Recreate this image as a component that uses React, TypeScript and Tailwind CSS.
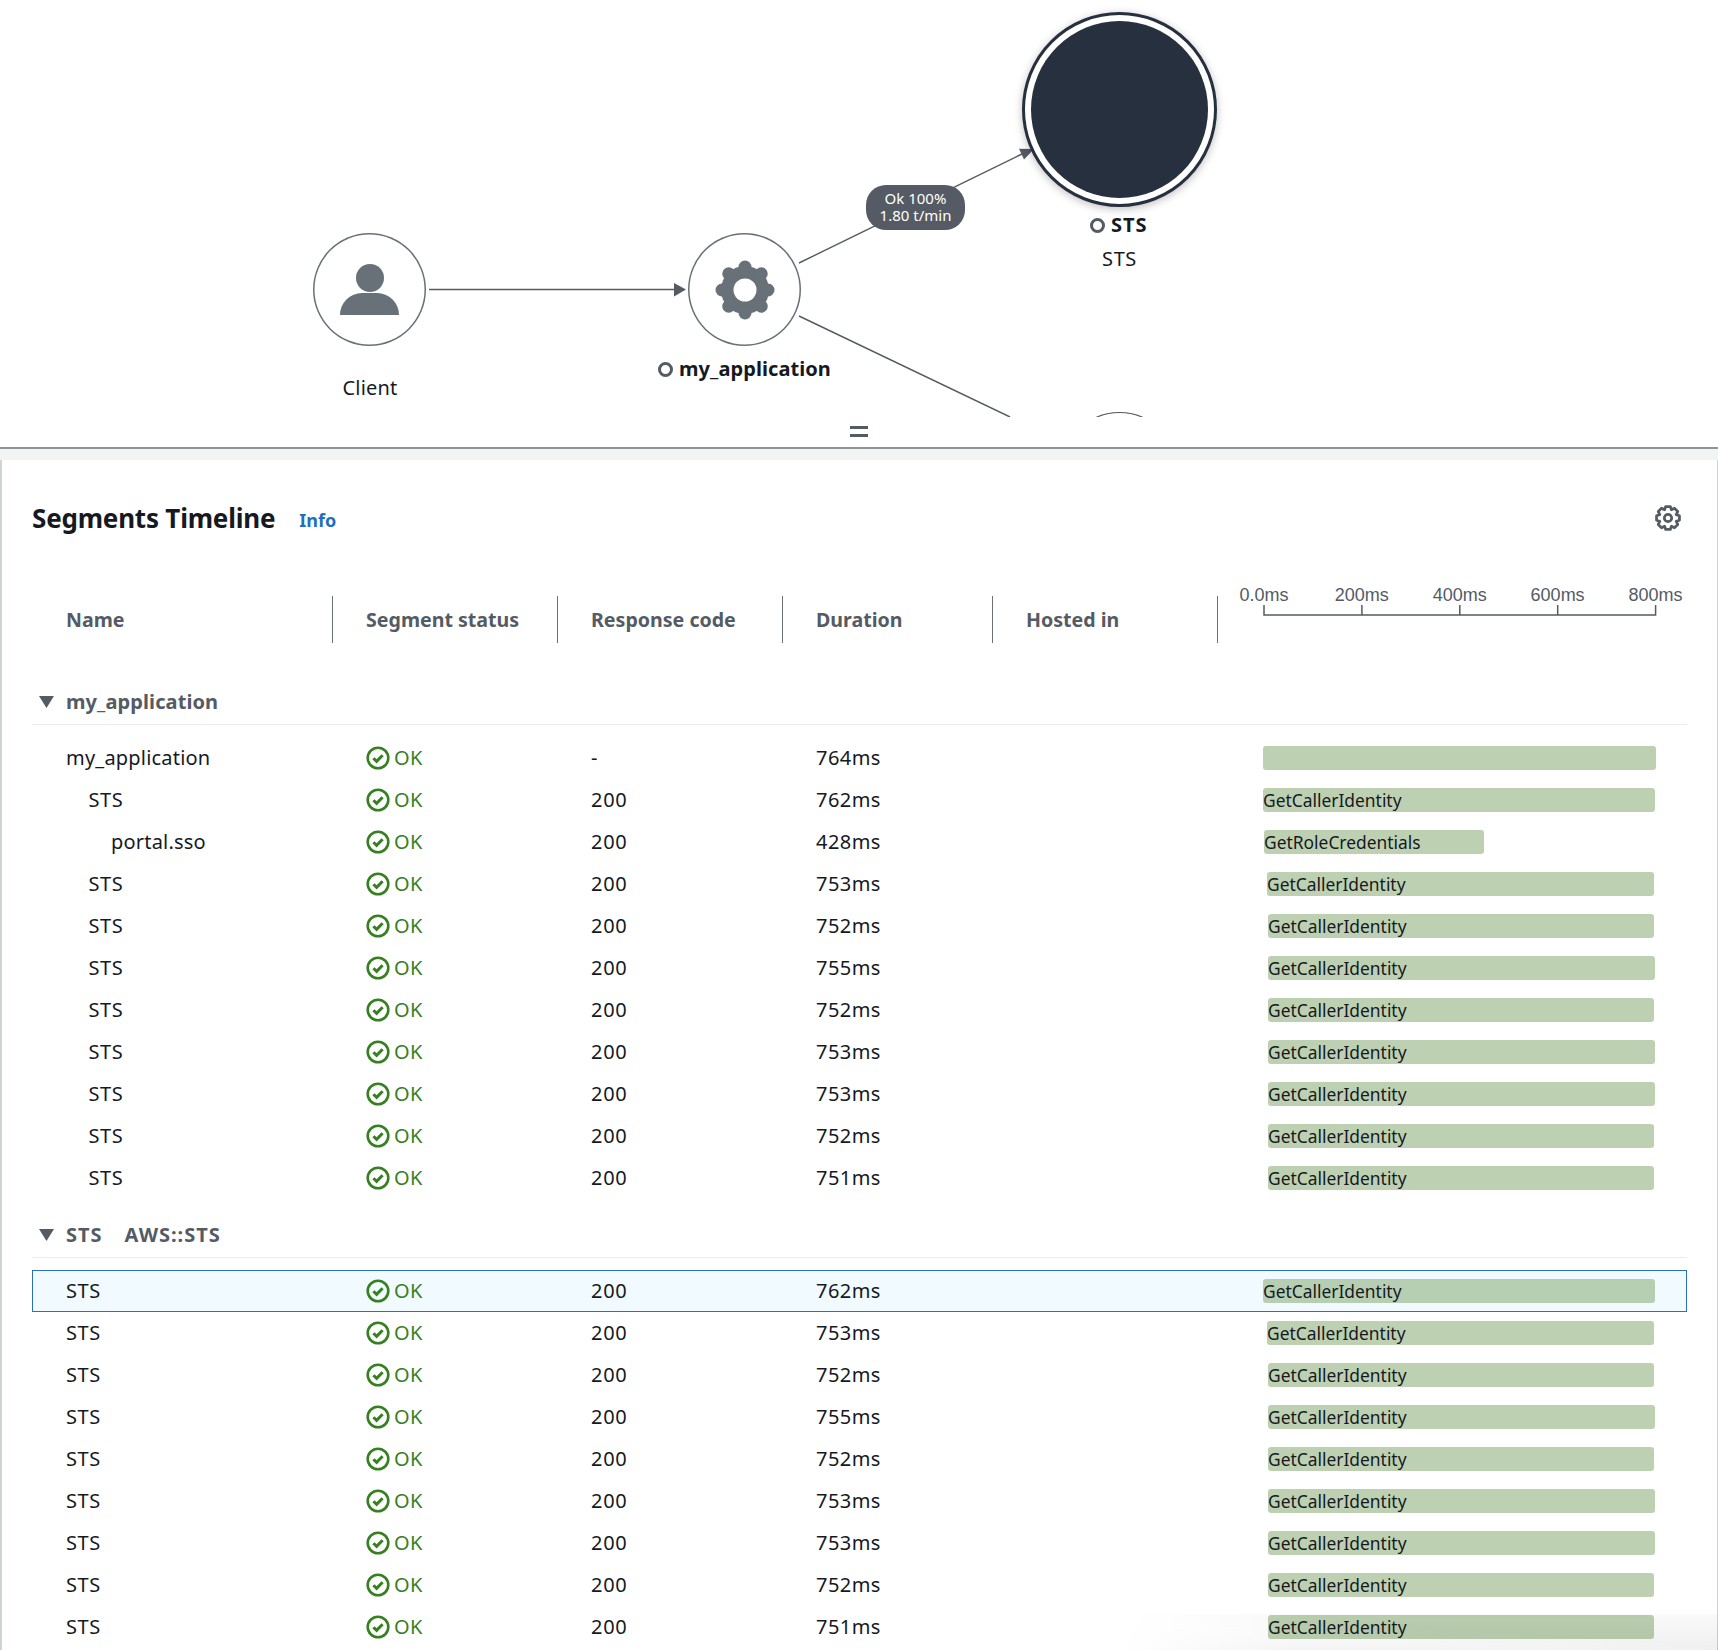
type Row = { name: string; indent: number; code: string; duration: string; op: string; left: number; right: number };

const firstRows: Row[] = [
  { name: 'my_application', indent: 0, code: '-', duration: '764ms', op: '', left: 1263, right: 1656 },
  { name: 'STS', indent: 1, code: '200', duration: '762ms', op: 'GetCallerIdentity', left: 1263, right: 1655 },
  { name: 'portal.sso', indent: 2, code: '200', duration: '428ms', op: 'GetRoleCredentials', left: 1264, right: 1484 },
  { name: 'STS', indent: 1, code: '200', duration: '753ms', op: 'GetCallerIdentity', left: 1267, right: 1654 },
  { name: 'STS', indent: 1, code: '200', duration: '752ms', op: 'GetCallerIdentity', left: 1268, right: 1654 },
  { name: 'STS', indent: 1, code: '200', duration: '755ms', op: 'GetCallerIdentity', left: 1268, right: 1655 },
  { name: 'STS', indent: 1, code: '200', duration: '752ms', op: 'GetCallerIdentity', left: 1268, right: 1654 },
  { name: 'STS', indent: 1, code: '200', duration: '753ms', op: 'GetCallerIdentity', left: 1268, right: 1655 },
  { name: 'STS', indent: 1, code: '200', duration: '753ms', op: 'GetCallerIdentity', left: 1268, right: 1655 },
  { name: 'STS', indent: 1, code: '200', duration: '752ms', op: 'GetCallerIdentity', left: 1268, right: 1654 },
  { name: 'STS', indent: 1, code: '200', duration: '751ms', op: 'GetCallerIdentity', left: 1268, right: 1654 },
];

const stsRows: Row[] = [
  { name: 'STS', indent: 0, code: '200', duration: '762ms', op: 'GetCallerIdentity', left: 1263, right: 1655 },
  { name: 'STS', indent: 0, code: '200', duration: '753ms', op: 'GetCallerIdentity', left: 1267, right: 1654 },
  { name: 'STS', indent: 0, code: '200', duration: '752ms', op: 'GetCallerIdentity', left: 1268, right: 1654 },
  { name: 'STS', indent: 0, code: '200', duration: '755ms', op: 'GetCallerIdentity', left: 1268, right: 1655 },
  { name: 'STS', indent: 0, code: '200', duration: '752ms', op: 'GetCallerIdentity', left: 1268, right: 1654 },
  { name: 'STS', indent: 0, code: '200', duration: '753ms', op: 'GetCallerIdentity', left: 1268, right: 1655 },
  { name: 'STS', indent: 0, code: '200', duration: '753ms', op: 'GetCallerIdentity', left: 1268, right: 1655 },
  { name: 'STS', indent: 0, code: '200', duration: '752ms', op: 'GetCallerIdentity', left: 1268, right: 1654 },
  { name: 'STS', indent: 0, code: '200', duration: '751ms', op: 'GetCallerIdentity', left: 1268, right: 1654 },
];

// outline of the small settings cog, 8 teeth
function cogOutline() {
  const pts: string[] = [];
  for (let i = 0; i < 8; i++) {
    const mid = (i * Math.PI) / 4;
    [
      [-0.39, 8.2],
      [-0.2, 10.8],
      [0.2, 10.8],
      [0.39, 8.2],
    ].forEach(([off, r]) => {
      const a = mid + off;
      pts.push(`${(12 + r * Math.sin(a)).toFixed(2)} ${(12 - r * Math.cos(a)).toFixed(2)}`);
    });
  }
  return `M${pts.join('L')}Z`;
}

function OkIcon() {
  return (
    <svg width="24" height="24" viewBox="0 0 24 24" fill="none" stroke="#37801f" strokeWidth="2.6">
      <circle cx="12" cy="12" r="10.3" />
      <path d="M7.4 12.2l3.2 3.2 6-6.2" strokeWidth="3" />
    </svg>
  );
}

function StatusDot() {
  return <span className="w-[15px] h-[15px] rounded-full border-[3px] border-[#545b64] inline-block" />;
}

function GearNode() {
  const angles = [0, 45, 90, 135, 180, 225, 270, 315];
  return (
    <svg width="60" height="60" viewBox="0 0 60 60">
      <circle cx="30" cy="30" r="24" fill="#687078" />
      {angles.map((a) => (
        <line key={a} x1="30" y1="9" x2="30" y2="7" stroke="#687078" strokeWidth="13" strokeLinecap="round" transform={`rotate(${a} 30 30)`} />
      ))}
      <circle cx="30" cy="30" r="11.5" fill="#fff" />
    </svg>
  );
}

function GraphCanvas() {
  return (
    <div className="relative h-[417px] overflow-hidden">
      <svg className="absolute inset-0" width="1718" height="417" fill="none">
        <path d="M429 289.5H676" stroke="#545b64" strokeWidth="1.4" />
        <path d="M674 283l12 6.5-12 7z" fill="#545b64" />
        <path d="M799 263L1026 152" stroke="#545b64" strokeWidth="1.4" />
        <path d="M1034 149l-15-.2 5 10.6z" fill="#545b64" />
        <path d="M799 316L1010 417" stroke="#545b64" strokeWidth="1.4" />
        <circle cx="1119.5" cy="468.5" r="56" stroke="#545b64" strokeWidth="1.2" />
      </svg>

      <div className="absolute left-[313px] top-[233px] w-[113px] h-[113px] rounded-full shadow-[inset_0_0_0_1.5px_#687078] bg-white flex flex-col items-center justify-center gap-[1px]">
        <span className="w-[28px] h-[28px] rounded-full bg-[#687078]" />
        <span className="w-[59px] h-[22px] rounded-t-[30px] bg-[#687078]" />
      </div>
      <div className="absolute left-[270px] top-[374px] w-[200px] text-center text-[20px] leading-[28px] tracking-[0.2px] text-[#16191f]">Client</div>

      <div className="absolute left-[688px] top-[233px] w-[113px] h-[113px] rounded-full shadow-[inset_0_0_0_1.5px_#687078] bg-white flex items-center justify-center">
        <GearNode />
      </div>
      <div className="absolute left-[658px] top-[355px] flex items-center gap-[6px] text-[20px] leading-[28px] font-bold tracking-[0.08px] text-[#16191f]">
        <StatusDot />
        my_application
      </div>

      <div className="absolute left-[866px] top-[185px] w-[99px] h-[45px] pb-[2px] rounded-[20px] bg-[#545b64] text-white text-[15px] leading-[17px] flex flex-col items-center justify-center">
        <span>Ok 100%</span>
        <span>1.80 t/min</span>
      </div>

      <div className="absolute left-[1022px] top-[12px] w-[195px] h-[195px] rounded-full border-[3px] border-[#27303f] bg-white shadow-[0_2px_8px_rgba(0,0,0,0.25)] flex items-center justify-center">
        <span className="w-[177px] h-[177px] rounded-full bg-[#27303f]" />
      </div>
      <div className="absolute left-[1090px] top-[211px] flex items-center gap-[6px] text-[20px] leading-[28px] font-bold tracking-[1px] text-[#16191f]">
        <StatusDot />
        STS
      </div>
      <div className="absolute left-[1020px] top-[245px] w-[199px] text-center text-[20px] leading-[28px] tracking-[0.6px] text-[#16191f]">STS</div>
    </div>
  );
}

function HeaderCell({ label, width }: { label: string; width: string }) {
  return (
    <div className={`${width} h-[47px] border-r border-[#687078] pl-[33px] flex items-center text-[19.6px] font-bold text-[#545b64]`}>
      {label}
    </div>
  );
}

function TimeAxis() {
  return (
    <div className="-ml-[3px] -mt-[11px]">
      <div className="grid grid-cols-[repeat(5,97.9px)] text-center text-[18px] leading-[20px] text-[#545b64] font-['Liberation_Sans',sans-serif]">
        <span>0.0ms</span>
        <span>200ms</span>
        <span>400ms</span>
        <span>600ms</span>
        <span>800ms</span>
      </div>
      <svg className="ml-[48px]" width="394" height="11" fill="none" stroke="#545b64" strokeWidth="1.5">
        <path d="M1 0v10H392.6V0M98.9 0v10M196.8 0v10M294.7 0v10" />
      </svg>
    </div>
  );
}

function GroupHeader({ children }: { children: React.ReactNode }) {
  return (
    <div className="h-[59px] ml-[30px] mr-[30px] border-b border-[#eaeded] flex items-center pt-[14px] text-[20px] font-bold text-[#545b64]">
      <svg className="ml-[7px] w-[15px] h-[12px] shrink-0" viewBox="0 0 15 12">
        <path d="M0 0h15L7.5 12z" fill="#545b64" />
      </svg>
      <div className="ml-[12px] flex gap-[22px]">{children}</div>
    </div>
  );
}

function SegmentRow({ row, selected }: { row: Row; selected?: boolean }) {
  return (
    <div
      className={`h-[42px] ml-[30px] mr-[30px] grid grid-cols-[334px_225px_225px_210px_237px_1fr] items-center text-[20px] text-[#16191f] ${
        selected ? 'bg-[#f1faff] outline outline-[#2a6fc0] -outline-offset-1' : ''
      }`}
    >
      <div className={row.name === 'STS' ? 'tracking-[0.6px]' : 'tracking-[0.2px]'} style={{ paddingLeft: 34 + row.indent * 22.5 }}>
        {row.name}
      </div>
      <div className="flex items-center gap-[4px] tracking-[0.5px] text-[#37801f]">
        <OkIcon />
        OK
      </div>
      <div className="tracking-[0.7px]">{row.code}</div>
      <div className="tracking-[0.45px]">{row.duration}</div>
      <div />
      <div
        className={`h-[24px] rounded-[3px] text-[17.4px] leading-[24px] whitespace-nowrap ${selected ? 'bg-[#b6cfb2]' : 'bg-[#bdd1b2]'}`}
        style={{ marginLeft: row.left - 1263, width: row.right - row.left }}
      >
        {row.op}
      </div>
    </div>
  );
}

export default function App() {
  return (
    <div className="relative w-[1718px] h-[1650px] overflow-hidden bg-white font-['Noto_Sans',sans-serif]">
      <GraphCanvas />
      <div className="h-[30px] flex justify-center pt-[9px]">
        <div className="w-[18px] h-[11px] border-y-[3px] border-[#545b64]" />
      </div>

      <div className="border-t-2 border-[#8d9596] bg-[#f2f3f3] pt-[11px]">
        <div className="bg-white h-[1200px] border-l-2 border-r border-[#cfd3d3]">
          <div className="h-[136px] pl-[30px] pr-[36px] pb-[20px] flex items-center justify-between">
            <div className="flex items-center gap-[24px]">
              <h2 className="text-[26px] font-bold tracking-[-0.2px] text-[#16191f]">Segments Timeline</h2>
              <a className="text-[18px] font-bold text-[#1f6fbf] mt-[4px]">Info</a>
            </div>
            <svg width="26" height="26" viewBox="0 0 24 24" fill="none" stroke="#545b64" strokeWidth="2.5" strokeLinejoin="round">
              <path d={cogOutline()} />
              <circle cx="12" cy="12" r="3.4" />
            </svg>
          </div>

          <div className="flex ml-[30px]">
            <HeaderCell label="Name" width="w-[301px] pl-[34px]" />
            <HeaderCell label="Segment status" width="w-[225px]" />
            <HeaderCell label="Response code" width="w-[225px]" />
            <HeaderCell label="Duration" width="w-[210px]" />
            <HeaderCell label="Hosted in" width="w-[225px]" />
            <TimeAxis />
          </div>

          <div className="h-[23px]" />
          <GroupHeader>
            <span className="tracking-[0.1px]">my_application</span>
          </GroupHeader>
          <div className="pt-[12px]">
            {firstRows.map((row, i) => (
              <SegmentRow key={i} row={row} />
            ))}
          </div>

          <GroupHeader>
            <span className="tracking-[1px]">STS</span>
            <span className="tracking-[1px]">AWS::STS</span>
          </GroupHeader>
          <div className="pt-[12px]">
            {stsRows.map((row, i) => (
              <SegmentRow key={i} row={row} selected={i === 0} />
            ))}
          </div>
        </div>
      </div>

      {/* soft fade in the bottom right corner */}
      <div className="absolute bottom-0 right-0 w-[600px] h-[36px] pointer-events-none bg-[linear-gradient(to_top_right,transparent_35%,rgba(0,0,0,0.02)_55%),linear-gradient(to_top,rgba(0,0,0,0.045),transparent)] [mask-image:linear-gradient(to_right,transparent,black_30%)]" />
    </div>
  );
}
